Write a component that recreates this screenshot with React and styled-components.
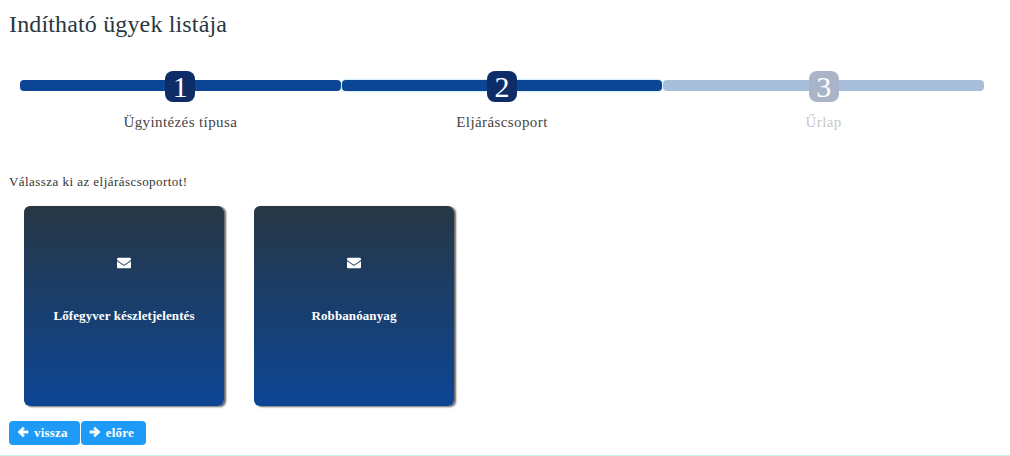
import React from 'react'
import styled, { createGlobalStyle } from 'styled-components'
import { FaEnvelope } from 'react-icons/fa'

const GlobalStyle = createGlobalStyle`
  html, body {
    margin: 0;
    padding: 0;
    background: #fff;
    font-family: "Liberation Serif", "DejaVu Serif", serif;
    color: #333;
  }
`

const steps = [
  { num: 1, label: 'Ügyintézés típusa', state: 'done' },
  { num: 2, label: 'Eljáráscsoport', state: 'active' },
  { num: 3, label: 'Űrlap', state: 'todo' },
]

const groups = ['Lőfegyver készletjelentés', 'Robbanóanyag']

// chunky arrow like the glyphicon one, pointing right; flipped for "vissza"
const Arrow = ({ flip }) => (
  <ArrowSvg viewBox="0 0 14 14" $flip={flip}>
    <path d="M7 .8 13.4 7 7 13.2 4.9 11.1 7.4 8.8H.8V5.2h6.6L4.9 2.9Z" fill="currentColor" />
  </ArrowSvg>
)

export default function App() {
  return (
    <Page>
      <GlobalStyle />
      <Title>Indítható ügyek listája</Title>
      <Stepper>
        {steps.map(s => (
          <Step key={s.num}>
            <Track $state={s.state}>
              <Badge $state={s.state}>{s.num}</Badge>
            </Track>
            <StepLabel $state={s.state}>{s.label}</StepLabel>
          </Step>
        ))}
      </Stepper>
      <Hint>Válassza ki az eljáráscsoportot!</Hint>
      <Cards>
        {groups.map(g => (
          <Card key={g}>
            <CardIcon><FaEnvelope /></CardIcon>
            <CardTitle>{g}</CardTitle>
          </Card>
        ))}
      </Cards>
      <Buttons>
        <NavButton><Arrow flip />vissza</NavButton>
        <NavButton><Arrow />előre</NavButton>
      </Buttons>
    </Page>
  )
}

const Page = styled.div`
  width: 1010px;
  height: 456px;
  box-sizing: border-box;
  padding: 11px 0 0 9px;
  border-bottom: 1px solid #c9f0ee;
  overflow: hidden;
`

const Title = styled.h1`
  margin: 0;
  font-size: 24px;
  line-height: 26px;
  letter-spacing: 0.15px;
  font-weight: 400;
  color: #2b3640;
`

const Stepper = styled.div`
  display: flex;
  gap: 1px;
  margin: 34px 0 0 11px;
  width: 964px;
`

const Step = styled.div`
  flex: 1;
  display: flex;
  flex-direction: column;
  align-items: center;
`

const Track = styled.div`
  position: relative;
  width: 100%;
  height: 11px;
  margin: 9px 0 0;
  border-radius: 4px;
  background: ${({ $state }) => ($state === 'todo' ? '#a8bfdc' : '#0d4595')};
  box-shadow: ${({ $state }) => ($state === 'active' ? '0 0 2px #5fc8f5' : 'none')};
`

const Badge = styled.div`
  position: absolute;
  left: 50%;
  top: -9px;
  transform: translateX(-50%);
  width: 30px;
  height: 31px;
  border-radius: 8px;
  display: flex;
  align-items: center;
  justify-content: center;
  font-size: 30px;
  line-height: 31px;
  color: #fff;
  background: ${({ $state }) => ($state === 'todo' ? '#a9b4c8' : '#0e2d68')};
`

const StepLabel = styled.div`
  margin-top: 22px;
  font-size: 15px;
  line-height: 18px;
  letter-spacing: 0.4px;
  color: ${({ $state }) => ($state === 'todo' ? '#c8c8c8' : '#444')};
`

const Hint = styled.div`
  margin-top: 43px;
  font-size: 13px;
  line-height: 16px;
  letter-spacing: 0.45px;
  color: #333;
`

const Cards = styled.div`
  display: flex;
  gap: 30px;
  margin: 16px 0 0 15px;
`

const Card = styled.div`
  width: 200px;
  height: 200px;
  box-sizing: border-box;
  padding-top: 50px;
  border-radius: 6px;
  background: linear-gradient(to bottom, #273744, #0c4595);
  box-shadow: 2px 1px 2px #666;
  color: #fff;
  text-align: center;
`

const CardIcon = styled.div`
  height: 13px;
  font-size: 14px;
  line-height: 13px;
`

const CardTitle = styled.div`
  margin-top: 39px;
  font-size: 13px;
  line-height: 16px;
  letter-spacing: 0.1px;
  font-weight: 700;
`

const Buttons = styled.div`
  display: flex;
  gap: 1px;
  margin-top: 15px;
`

const NavButton = styled.button`
  height: 24px;
  padding: 0 12px 0 8px;
  display: flex;
  align-items: center;
  gap: 5px;
  border: none;
  border-radius: 4px;
  background: #1e9bf7;
  color: #fff;
  font-family: inherit;
  font-size: 13px;
  letter-spacing: 0.2px;
  font-weight: 700;
`

const ArrowSvg = styled.svg`
  width: 12px;
  height: 12px;
  margin-top: -3px;
  transform: ${({ $flip }) => ($flip ? 'scaleX(-1)' : 'none')};
`
